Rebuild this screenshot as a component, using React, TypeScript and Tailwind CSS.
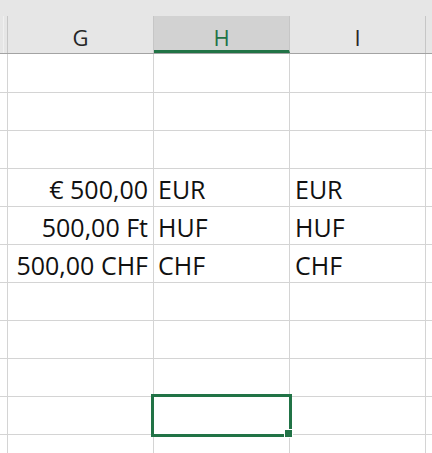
import React from "react";

const cols = ["w-[8px]", "w-[146px]", "w-[136px]", "w-[136px]", "w-[6px]"];

type Row = { g?: string; h?: string; i?: string };

const rows: Row[] = [
  {},
  {},
  {},
  { g: "€ 500,00", h: "EUR", i: "EUR" },
  { g: "500,00 Ft", h: "HUF", i: "HUF" },
  { g: "500,00 CHF", h: "CHF", i: "CHF" },
  {},
  {},
  {},
  {},
  {},
];

export default function App() {
  return (
    <div
      className="relative w-[432px] h-[453px] overflow-hidden bg-white text-[#111]"
      style={{ fontFamily: '"Open Sans", "Noto Sans", sans-serif' }}
    >
      {/* column header */}
      <div className="h-[54px] bg-[#e6e6e6] flex flex-col">
        <div className="h-[16px]" />
        <div className="flex h-[38px] border-b border-[#a3a3a3]">
          <div className="w-[8px] border-r border-[#c6c6c6] relative">
            <div className="absolute left-[3px] top-0 bottom-0 w-px bg-[#f0f0f0]" />
          </div>
          <div className="w-[146px] border-r border-[#c6c6c6] flex items-center justify-center text-[22px] leading-none text-[#262626] pt-[5px]">
            G
          </div>
          <div className="w-[136px] border-r border-[#c6c6c6] bg-[#d2d2d2] border-b-[3px] border-b-[#217346] flex items-center justify-center text-[22px] leading-none text-[#217346] pt-[8px]">
            H
          </div>
          <div className="w-[136px] border-r border-[#c6c6c6] flex items-center justify-center text-[22px] leading-none text-[#262626] pt-[5px]">
            I
          </div>
          <div className="w-[6px]" />
        </div>
      </div>

      {/* body */}
      <div className="flex flex-col">
        {rows.map((r, idx) => (
          <div
            key={idx}
            className={`flex border-b border-[#d4d4d4] ${idx === 0 ? "h-[39px]" : "h-[38px]"}`}
          >
            <div className={`${cols[0]} border-r border-[#d4d4d4]`} />
            <div className={`${cols[1]} border-r border-[#d4d4d4] flex items-center justify-end pr-[5px] text-[25px] leading-none whitespace-nowrap pt-[3px]`}>
              {r.g}
            </div>
            <div className={`${cols[2]} border-r border-[#d4d4d4] flex items-center pl-[4px] text-[25px] leading-none whitespace-nowrap pt-[3px]`}>
              {r.h}
            </div>
            <div className={`${cols[3]} border-r border-[#d4d4d4] flex items-center pl-[5px] text-[25px] leading-none whitespace-nowrap pt-[3px]`}>
              {r.i}
            </div>
            <div className={cols[4]} />
          </div>
        ))}
      </div>

      {/* selection */}
      <div className="absolute left-[151px] top-[394px] w-[141px] h-[43px] border-[3px] border-[#217346]" />
      <div className="absolute left-[284px] top-[429px] w-[9px] h-[9px] bg-[#217346] border border-white" />
    </div>
  );
}
